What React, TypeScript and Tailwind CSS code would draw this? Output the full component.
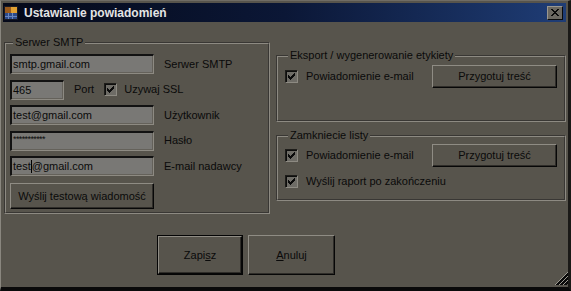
import React from "react";

function Check() {
  const cols = [2, 3, 4, 3, 2, 1, 0];
  return (
    <span className="flex w-[13px] h-[13px] shrink-0 items-center justify-center bg-[#6e6c66] border border-t-[#1e1d1a] border-l-[#1e1d1a] border-b-[#8d8a82] border-r-[#8d8a82] shadow-[inset_1px_1px_0_#0e0e0d]">
      <svg width="7" height="7" viewBox="0 0 7 7" shapeRendering="crispEdges">
        {cols.map((top, i) => (
          <rect key={i} x={i} y={top} width="1" height="3" fill="#0b0b0b" />
        ))}
      </svg>
    </span>
  );
}

function Field({ className, children }: { className: string; children: React.ReactNode }) {
  return (
    <div
      className={`h-[20px] flex items-center pl-[1px] bg-[#797875] border-t-2 border-l-2 border-b border-r border-t-[#121212] border-l-[#121212] border-b-[#8d8a82] border-r-[#8d8a82] shadow-[inset_-1px_-1px_0_#64615a] whitespace-nowrap overflow-hidden ${className}`}
    >
      {children}
    </div>
  );
}

function Btn({ className, children }: { className: string; children: React.ReactNode }) {
  return (
    <div
      className={`flex items-center justify-center bg-[#57544c] border border-t-[#8f8c84] border-l-[#8f8c84] border-b-[#070707] border-r-[#070707] shadow-[inset_-1px_-1px_0_#2f2d29] whitespace-nowrap ${className}`}
    >
      {children}
    </div>
  );
}

function Group({ className, title, children }: { className: string; title: string; children: React.ReactNode }) {
  return (
    <fieldset className={`border-2 [border-style:groove] border-[#8d8a82] ${className}`}>
      <legend className="ml-[3px] px-[2px] leading-[13px] bg-[#57544c]">{title}</legend>
      {children}
    </fieldset>
  );
}

export default function App() {
  return (
    <div className="relative w-[571px] h-[291px] bg-[#57544c] border-l border-t border-l-[#8a877f] border-t-[#6f6c65] border-r-[3px] border-r-[#1a1917] border-b-[4px] border-b-[#0a0a0a] p-[2px] flex flex-col font-['Liberation_Sans',Arial,sans-serif] text-[11px] text-[#0a0a0a] overflow-hidden">
      {/* title bar */}
      <div className="h-[19px] shrink-0 flex items-center bg-linear-to-r from-[#050919] via-[#0b1736] to-[#1f3d76] pl-[1px] pr-[3px]">
        <svg width="14" height="14" viewBox="0 0 14 14" shapeRendering="crispEdges">
          <rect x="0" y="0" width="14" height="14" fill="#1a1a22" />
          <rect x="1" y="1" width="6" height="6" fill="#9a5a1c" />
          <rect x="7" y="1" width="6" height="6" fill="#e0a032" />
          <rect x="1" y="7" width="12" height="6" fill="#2c4a8a" />
          <rect x="4" y="7" width="1" height="6" fill="#6a86c0" />
          <rect x="8" y="7" width="1" height="6" fill="#6a86c0" />
          <rect x="1" y="10" width="12" height="1" fill="#6a86c0" />
        </svg>
        <span className="ml-[6px] font-bold text-[12px] text-[#e4e4e4]">Ustawianie powiadomień</span>
        <div className="ml-auto w-[16px] h-[14px] flex items-center justify-center bg-[#6b6861] border border-t-[#9a978f] border-l-[#9a978f] border-b-[#0a0a0a] border-r-[#0a0a0a]">
          <svg width="8" height="7" viewBox="0 0 8 7" shapeRendering="crispEdges">
            {[0, 1, 2, 3, 4, 5, 6].map((i) => (
              <React.Fragment key={i}>
                <rect x={i} y={i} width="2" height="1" fill="#0a0a0a" />
                <rect x={6 - i} y={i} width="2" height="1" fill="#0a0a0a" />
              </React.Fragment>
            ))}
          </svg>
        </div>
      </div>

      {/* main */}
      <div className="flex gap-[6px] pl-[1px]">
        <Group className="mt-[14px] w-[266px] h-[178px] pl-[4px] pt-[5px]" title="Serwer SMTP">
          <div className="flex flex-col gap-[5.5px]">
            <div className="flex items-center">
              <Field className="w-[144px]">smtp.gmail.com</Field>
              <span className="ml-[10px]">Serwer SMTP</span>
            </div>
            <div className="flex items-center">
              <Field className="w-[54px]">465</Field>
              <span className="ml-[10px]">Port</span>
              <span className="ml-[10px]">
                <Check />
              </span>
              <span className="ml-[7px]">Uzywaj SSL</span>
            </div>
            <div className="flex items-center">
              <Field className="w-[144px]">test@gmail.com</Field>
              <span className="ml-[10px]">Użytkownik</span>
            </div>
            <div className="flex items-center">
              <Field className="w-[144px] items-start">
                <span className="text-[9px] leading-[12px] tracking-[-0.6px]">***********</span>
              </Field>
              <span className="ml-[10px]">Hasło</span>
            </div>
            <div className="flex items-center">
              <Field className="w-[144px]">
                test<span className="inline-block w-px h-[13px] bg-black" />@gmail.com
              </Field>
              <span className="ml-[10px]">E-mail nadawcy</span>
            </div>
            <Btn className="mt-[1.5px] w-[144px] h-[26px]">Wyślij testową wiadomość</Btn>
          </div>
        </Group>

        <div className="flex flex-col">
          <Group className="mt-[27px] w-[290px] h-[73px] pl-[7px] pr-[7px] pt-[3px]" title="Eksport / wygenerowanie etykiety">
            <div className="flex items-center">
              <Check />
              <span className="ml-[8px]">Powiadomienie e-mail</span>
              <Btn className="ml-auto w-[125px] h-[23px]">Przygotuj treść</Btn>
            </div>
          </Group>
          <Group className="mt-[7px] w-[290px] h-[72px] pl-[7px] pr-[7px] pt-[2px]" title="Zamkniecie listy">
            <div className="flex items-center">
              <Check />
              <span className="ml-[8px]">Powiadomienie e-mail</span>
              <Btn className="ml-auto w-[125px] h-[23px]">Przygotuj treść</Btn>
            </div>
            <div className="flex items-center mt-[6px]">
              <Check />
              <span className="ml-[8px]">Wyślij raport po zakończeniu</span>
            </div>
          </Group>
        </div>
      </div>

      {/* bottom buttons */}
      <div className="flex gap-[5px] pl-[154px] mt-[21px]">
        <div className="w-[86px] h-[40px] border border-[#050505] flex">
          <Btn className="flex-1">
            <span>
              Zapi<span className="underline">s</span>z
            </span>
          </Btn>
        </div>
        <Btn className="w-[87px] h-[40px]">
          <span>
            <span className="underline">A</span>nuluj
          </span>
        </Btn>
      </div>

      {/* size grip */}
      <svg className="absolute right-0 bottom-[2px]" width="13" height="13" viewBox="0 0 13 13" shapeRendering="crispEdges">
        {[0, 4, 8].map((o) => (
          <React.Fragment key={o}>
            <path d={`M${o + 1} 13 L13 ${o + 1}`} stroke="#0a0a0a" strokeWidth="1.2" />
            <path d={`M${o + 2.5} 13 L13 ${o + 2.5}`} stroke="#0a0a0a" strokeWidth="1.2" />
            <path d={`M${o} 13 L13 ${o}`} stroke="#9c9990" strokeWidth="1" />
          </React.Fragment>
        ))}
      </svg>
    </div>
  );
}
